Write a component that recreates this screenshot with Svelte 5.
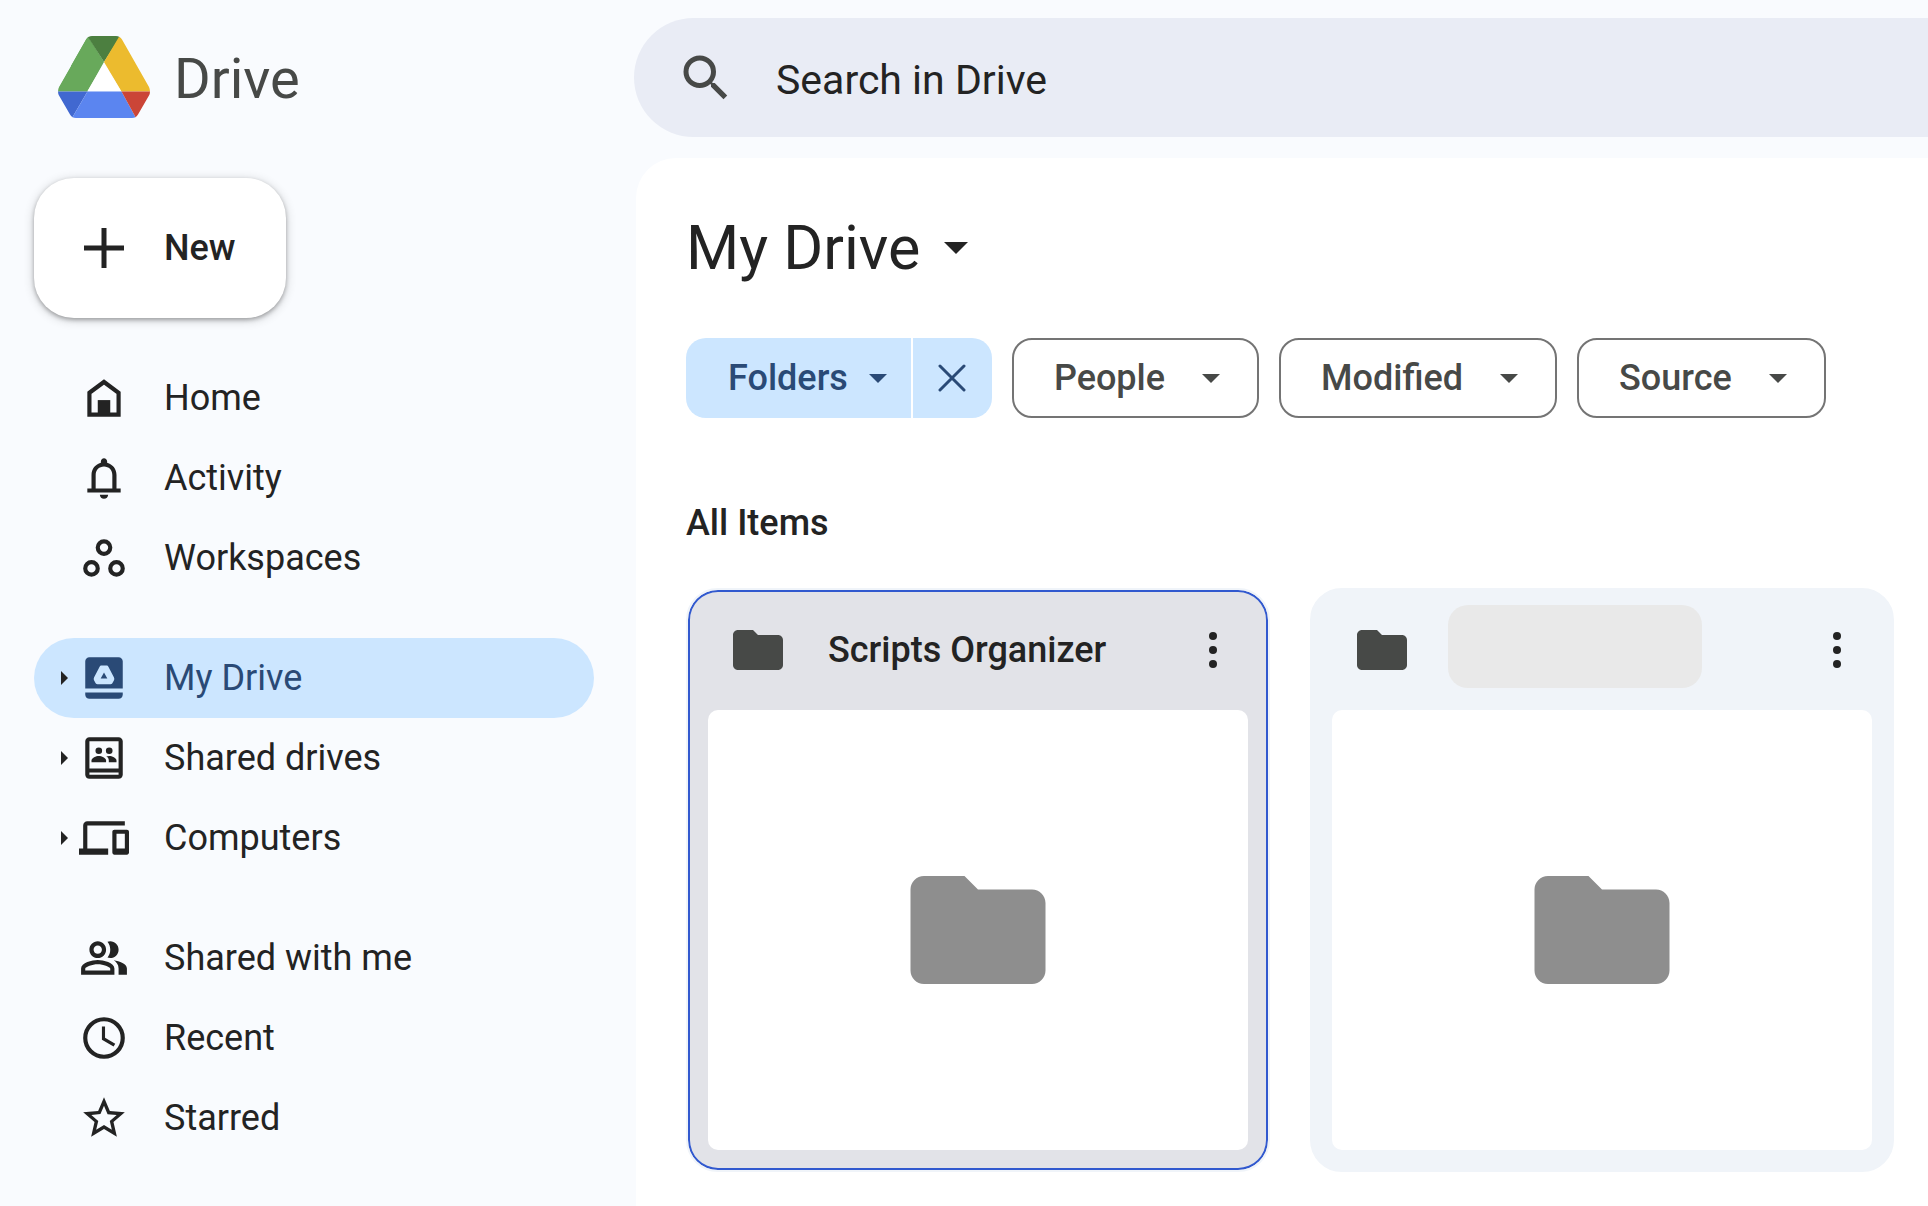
<script lang="ts">
	interface NavItem {
		id: string;
		label: string;
		expandable?: boolean;
	}

	interface DriveFolder {
		id: number;
		name: string;
	}

	const navGroups: NavItem[][] = [
		[
			{ id: 'home', label: 'Home' },
			{ id: 'activity', label: 'Activity' },
			{ id: 'workspaces', label: 'Workspaces' }
		],
		[
			{ id: 'my-drive', label: 'My Drive', expandable: true },
			{ id: 'shared-drives', label: 'Shared drives', expandable: true },
			{ id: 'computers', label: 'Computers', expandable: true }
		],
		[
			{ id: 'shared-with-me', label: 'Shared with me' },
			{ id: 'recent', label: 'Recent' },
			{ id: 'starred', label: 'Starred' }
		]
	];

	const filters = ['People', 'Modified', 'Source'];

	// an empty name is drawn as a grey placeholder
	const folders: DriveFolder[] = [
		{ id: 1, name: 'Scripts Organizer' },
		{ id: 2, name: '' }
	];

	let current = $state('my-drive');
	let selected = $state(1);
	let foldersOnly = $state(true);
	let query = $state('');
</script>

{#snippet caret()}
	<svg class="caret" viewBox="0 0 10 5" aria-hidden="true"><path d="M0 0h10L5 5z" /></svg>
{/snippet}

{#snippet folderIcon()}
	<svg class="folder-icon" viewBox="0 0 24 24" aria-hidden="true">
		<path d="M10 4H4c-1.1 0-2 .9-2 2v12c0 1.1.9 2 2 2h16c1.1 0 2-.9 2-2V8c0-1.1-.9-2-2-2h-8z" />
	</svg>
{/snippet}

{#snippet navIcon(id: string)}
	<svg class="nav-icon" viewBox="0 0 24 24" aria-hidden="true">
		{#if id === 'home'}
			<path d="M5 9.5 12 4.3l7 5.2V20H5z" fill="none" stroke="currentColor" stroke-width="2" />
			<path d="M9 13h6v7H9z" />
		{:else if id === 'activity'}
			<path
				d="M18 17v-6.500c0-2.870-1.900-5.100-4.500-5.800V4c0-.83-.67-1.500-1.500-1.500s-1.500.67-1.500 1.500v.7C7.900 5.400 6 7.630 6 10.500V17H4v2h16v-2zm-2 0H8v-6.500c0-2.300 1.700-4 4-4s4 1.700 4 4zM10 20c0 1.100.9 2 2 2s2-.9 2-2z"
			/>
		{:else if id === 'workspaces'}
			<g fill="none" stroke="currentColor" stroke-width="2">
				<circle cx="12" cy="7" r="3" />
				<circle cx="6" cy="17" r="3" />
				<circle cx="18" cy="17" r="3" />
			</g>
		{:else if id === 'my-drive'}
			<path
				fill-rule="evenodd"
				d="M5 2h14c1.100 0 2 .9 2 2v13H3V4c0-1.100.9-2 2-2zm5.600 4Q10.200 6 9.900 6.600L7.200 11.800Q6.900 12.500 7.200 13.100L8 14.500Q8.300 15 8.900 15h6.200Q15.700 15 16 14.500l.8-1.400Q17.100 12.500 16.800 11.800L14.100 6.600Q13.800 6 13.400 6zM12 9.300l1.600 2.900h-3.200z"
			/>
			<path d="M3 19h18v1c0 1.100-.9 2-2 2H5c-1.100 0-2-.9-2-2z" />
		{:else if id === 'shared-drives'}
			<path
				fill-rule="evenodd"
				d="M5 2h14c1.100 0 2 .9 2 2v16c0 1.100-.9 2-2 2H5c-1.100 0-2-.9-2-2V4c0-1.100.9-2 2-2zm0 2v13h14V4zm0 15v1h14v-1z"
			/>
			<circle cx="9.500" cy="8.500" r="1.600" />
			<circle cx="14.500" cy="8.500" r="1.600" />
			<path d="M6 14v-.8c0-1.300 2.200-2.200 3.500-2.200s3.500.9 3.500 2.200v.8z" />
			<path d="M14.300 14v-.8c0-.9-.5-1.500-1.200-2 .5-.1 1-.2 1.400-.2 1.300 0 3.500.9 3.500 2.200v.8z" />
		{:else if id === 'computers'}
			<path
				d="M4 6h18V4H4c-1.100 0-2 .9-2 2v11H0v3h14v-3H4zm19 2h-6c-.55 0-1 .45-1 1v10c0 .55.45 1 1 1h6c.55 0 1-.45 1-1V9c0-.55-.45-1-1-1zm-1 9h-4v-7h4z"
			/>
		{:else if id === 'shared-with-me'}
			<path
				d="M16.670 13.130C18.040 14.060 19 15.320 19 17v3h4v-3c0-2.180-3.570-3.470-6.330-3.870zM15 12c2.210 0 4-1.790 4-4s-1.790-4-4-4c-.47 0-.91.1-1.330.24C14.500 5.270 15 6.580 15 8s-.5 2.730-1.330 3.760c.42.14.86.24 1.330.24zM9 12c2.210 0 4-1.790 4-4s-1.790-4-4-4-4 1.790-4 4 1.790 4 4 4zm0-6c1.100 0 2 .9 2 2s-.9 2-2 2-2-.9-2-2 .9-2 2-2zm0 7c-2.670 0-8 1.340-8 4v3h16v-3c0-2.660-5.330-4-8-4zm6 5H3v-.99C3.200 16.290 6.300 15 9 15s5.800 1.290 6 2z"
			/>
		{:else if id === 'recent'}
			<circle cx="12" cy="12" r="9" fill="none" stroke="currentColor" stroke-width="2" />
			<path d="M12.500 6.500H11v6.300l5.600 3.300.8-1.300-4.900-2.900z" />
		{:else if id === 'starred'}
			<path
				d="m22 9.240-7.190-.62L12 2 9.190 8.630 2 9.240l5.460 4.730L5.820 21 12 17.270 18.180 21l-1.630-7.030zM12 15.400l-3.760 2.270 1-4.280-3.320-2.880 4.380-.38L12 6.100l1.710 4.040 4.380.38-3.320 2.880 1 4.280z"
			/>
		{/if}
	</svg>
{/snippet}

<div class="app">
	<aside class="sidebar">
		<a class="brand" href="#home">
			<svg class="brand-logo" viewBox="0 0 92 82" aria-hidden="true">
				<clipPath id="logo-shape">
					<path
						d="M34 0h24q4 0 6 3.500L91 51q2 4.500 0 8.500L80 78.500Q78 82 74 82H18q-4 0-6-3.500L1 59.500q-2-4 0-8.500L28 3.500Q30 0 34 0z"
					/>
				</clipPath>
				<g clip-path="url(#logo-shape)">
					<path fill="#68a95b" d="M30 0 0 52v3.500h29.500L46 26z" />
					<path fill="#68a95b" d="M0 0h31v30H0z" />
					<path fill="#4c7f40" d="M30 1V0h32v1L46 26z" />
					<path fill="#ecbb2e" d="M61.500 0 46 26l17.500 29.500H92V0z" />
					<path fill="#4168d0" d="M0 55.500h29.500L14 82H0z" />
					<path fill="#5b85f0" d="M29.500 55.500h34L78 82H14z" />
					<path fill="#cb4537" d="M63.500 55.500H92V82H78z" />
				</g>
				<path fill="#fff" d="M46 27 63 55H29.500z" />
			</svg>
			<span>Drive</span>
		</a>

		<button class="new-button" type="button">
			<svg viewBox="0 0 24 24" aria-hidden="true">
				<path d="M11 4h2v7h7v2h-7v7h-2v-7H4v-2h7z" />
			</svg>
			New
		</button>

		<nav aria-label="Drive">
			{#each navGroups as group}
				<ul>
					{#each group as item (item.id)}
						<li class:active={current === item.id}>
							{#if item.expandable}
								<button class="expand" type="button" aria-label="Expand {item.label}">
									<svg viewBox="0 0 7 14" aria-hidden="true"><path d="M0 0v14l7-7z" /></svg>
								</button>
							{:else}
								<span class="expand"></span>
							{/if}
							<a href="#{item.id}" onclick={() => (current = item.id)}>
								{@render navIcon(item.id)}
								{item.label}
							</a>
						</li>
					{/each}
				</ul>
			{/each}
		</nav>
	</aside>

	<div class="content">
		<form class="search" role="search">
			<button type="submit" aria-label="Search">
				<svg viewBox="0 0 24 24" aria-hidden="true">
					<path
						d="M15.500 14h-.79l-.28-.27A6.470 6.470 0 0 0 16 9.500 6.500 6.500 0 1 0 9.500 16c1.610 0 3.090-.59 4.230-1.570l.27.28v.79l5 4.990L20.490 19zm-6 0C7.010 14 5 11.990 5 9.500S7.010 5 9.500 5 14 7.010 14 9.500 11.990 14 9.500 14z"
					/>
				</svg>
			</button>
			<input type="text" placeholder="Search in Drive" aria-label="Search in Drive" bind:value={query} />
		</form>

		<main>
			<h1>
				<button class="title" type="button">
					My Drive
					{@render caret()}
				</button>
			</h1>

			<div class="chips">
				{#if foldersOnly}
					<div class="chip-group">
						<button class="chip-on" type="button">
							Folders
							{@render caret()}
						</button>
						<button
							class="chip-clear"
							type="button"
							aria-label="Clear filter"
							onclick={() => (foldersOnly = false)}
						>
							<svg viewBox="0 0 28 28" aria-hidden="true"><path d="m2 2 24 24M26 2 2 26" /></svg>
						</button>
					</div>
				{/if}
				{#each filters as filter}
					<button class="chip" type="button">
						{filter}
						{@render caret()}
					</button>
				{/each}
			</div>

			<h2>All Items</h2>

			<div class="cards">
				{#each folders as folder (folder.id)}
					<article class="card" class:selected={selected === folder.id}>
						<header>
							{@render folderIcon()}
							{#if folder.name}
								<h3>{folder.name}</h3>
							{:else}
								<span class="name-placeholder"></span>
							{/if}
							<button class="more" type="button" aria-label="More actions">
								<svg viewBox="0 0 24 60" aria-hidden="true">
									<circle cx="12" cy="16" r="4" />
									<circle cx="12" cy="30" r="4" />
									<circle cx="12" cy="44" r="4" />
								</svg>
							</button>
						</header>
						<button
							class="preview"
							type="button"
							aria-label="Select folder"
							onclick={() => (selected = folder.id)}
						>
							{@render folderIcon()}
						</button>
					</article>
				{/each}
			</div>
		</main>
	</div>
</div>

<style>
	:global(body) {
		background: #f9fbfe;
	}

	.app {
		display: grid;
		grid-template-columns: 634px minmax(0, 1fr);
		min-height: 100vh;
		box-sizing: border-box;
		padding-top: 18px;
		overflow: hidden;
		color: #232323;
		font-family: Roboto, 'Liberation Sans', sans-serif;
		font-size: 36px;
		line-height: 40px;
	}

	button,
	input {
		margin: 0;
		padding: 0;
		border: 0;
		background: none;
		color: inherit;
		font: inherit;
	}

	button {
		display: flex;
		align-items: center;
		cursor: pointer;
	}

	a {
		color: inherit;
		text-decoration: none;
	}

	svg {
		flex-shrink: 0;
		fill: currentColor;
	}

	h1,
	h2,
	h3 {
		margin: 0;
		font-size: inherit;
		font-weight: 500;
	}

	/* sidebar */
	.sidebar {
		padding: 0 40px 40px 34px;
	}

	.brand {
		display: flex;
		align-items: center;
		gap: 24px;
		height: 118px;
		padding-left: 24px;
		color: #474947;
		font-size: 56px;
		line-height: 60px;
	}

	.brand span {
		padding-top: 4px;
	}

	.brand-logo {
		width: 92px;
		height: 82px;
	}

	.new-button {
		gap: 30px;
		height: 140px;
		margin: 42px 0 40px;
		padding: 0 50px 0 40px;
		border-radius: 40px;
		background: #fff;
		box-shadow:
			0 2px 4px rgba(0, 0, 0, 0.3),
			0 2px 10px 2px rgba(0, 0, 0, 0.12);
		font-weight: 500;
	}

	.new-button svg {
		width: 60px;
		height: 60px;
	}

	nav {
		display: flex;
		flex-direction: column;
		gap: 40px;
	}

	ul {
		margin: 0;
		padding: 0;
		list-style: none;
	}

	li {
		display: flex;
		height: 80px;
		border-radius: 40px;
	}

	li.active {
		background: #cce6ff;
	}

	li a {
		display: flex;
		flex: 1;
		align-items: center;
		gap: 35px;
	}

	li.active a {
		color: #2a4a76;
	}

	.expand {
		box-sizing: border-box;
		justify-content: flex-end;
		width: 45px;
		padding-right: 11px;
	}

	.expand svg {
		width: 7px;
		height: 14px;
	}

	.nav-icon {
		width: 50px;
		height: 50px;
	}

	/* search */
	.search {
		display: flex;
		align-items: center;
		gap: 40px;
		height: 119px;
		padding-left: 42px;
		border-radius: 60px 0 0 60px;
		background: #e9ecf5;
		font-size: 41px;
		line-height: 50px;
	}

	.search svg {
		display: block;
		width: 60px;
		height: 60px;
		color: #474947;
	}

	.search input {
		flex: 1;
		min-width: 0;
		padding-top: 4px;
		outline: none;
	}

	.search input::placeholder {
		color: #232323;
		opacity: 1;
	}

	/* main panel */
	.content {
		display: flex;
		flex-direction: column;
	}

	main {
		flex: 1;
		margin: 21px 0 0 2px;
		padding: 54px 34px 34px 50px;
		border-radius: 40px 0 0 0;
		background: #fff;
	}

	.title {
		gap: 24px;
		font-size: 61px;
		font-weight: 400;
		line-height: 72px;
	}

	.caret {
		width: 18px;
		height: 9px;
	}

	.title .caret {
		width: 24px;
		height: 12px;
	}

	.chips {
		display: flex;
		gap: 20px;
		margin: 54px 0 85px;
		font-weight: 500;
	}

	.chip-group {
		display: flex;
		gap: 2px;
		overflow: hidden;
		border-radius: 20px;
		color: #2a4a76;
	}

	.chip-on,
	.chip-clear {
		height: 80px;
		background: #cce6ff;
	}

	.chip-on {
		gap: 21px;
		padding: 0 24px 0 42px;
	}

	.chip-clear {
		justify-content: center;
		width: 79px;
	}

	.chip-clear svg {
		width: 28px;
		height: 28px;
		fill: none;
		stroke: currentColor;
		stroke-width: 3;
		stroke-linecap: round;
	}

	.chip {
		box-sizing: border-box;
		gap: 37px;
		height: 80px;
		padding: 0 37px 0 40px;
		border: 2px solid #747474;
		border-radius: 20px;
		color: #474947;
	}

	.cards {
		display: grid;
		grid-template-columns: repeat(2, minmax(0, 1fr));
		gap: 40px;
		margin-top: 45px;
	}

	.card {
		padding: 0 20px 20px;
		border: 2px solid #f0f4f9;
		border-radius: 32px;
		background: #f0f4f9;
	}

	.card.selected {
		background: #e2e3e8;
		box-shadow: inset 0 0 0 2px #3159cf;
	}

	.card header {
		display: flex;
		align-items: center;
		gap: 36px;
		height: 120px;
		padding: 0 5px 0 20px;
	}

	.card header .folder-icon {
		width: 60px;
		height: 60px;
		color: #474947;
	}

	h3 {
		padding-left: 4px;
	}

	.name-placeholder {
		width: 254px;
		height: 83px;
		margin-bottom: 8px;
		border-radius: 20px;
		background: #e9e9e9;
	}

	.more {
		justify-content: center;
		width: 60px;
		margin-left: auto;
	}

	.more svg {
		width: 24px;
		height: 60px;
	}

	.preview {
		justify-content: center;
		width: 100%;
		aspect-ratio: 27 / 22;
		border-radius: 10px;
		background: #fff;
		color: #8e8e8e;
	}

	.preview .folder-icon {
		width: 30%;
	}
</style>
